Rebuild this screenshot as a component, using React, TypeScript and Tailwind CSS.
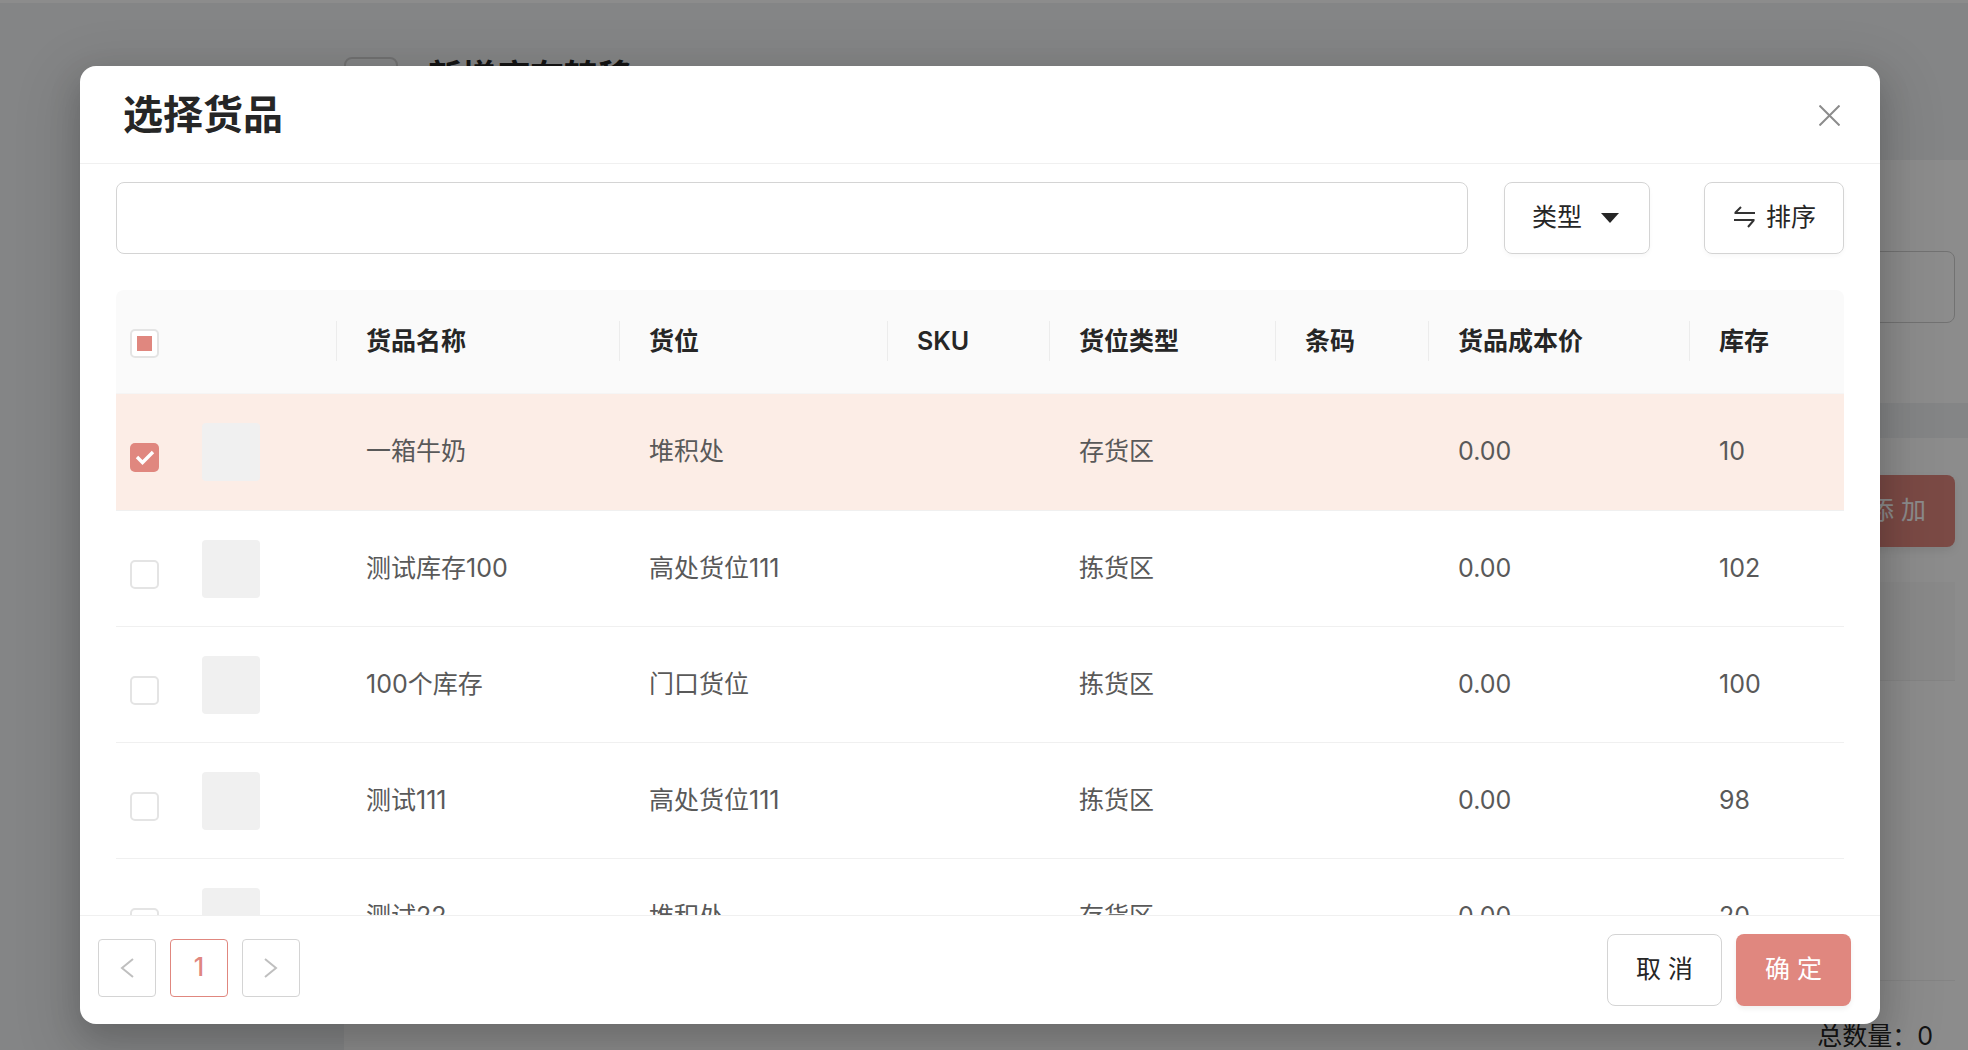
const cols = "grid grid-cols-[220px_283px_268px_162px_226px_153px_261px_155px]";
const heads = ["货品名称", "货位", "SKU", "货位类型", "条码", "货品成本价", "库存"];
const rows = [
  ["一箱牛奶", "堆积处", "", "存货区", "", "0.00", "10"],
  ["测试库存100", "高处货位111", "", "拣货区", "", "0.00", "102"],
  ["100个库存", "门口货位", "", "拣货区", "", "0.00", "100"],
  ["测试111", "高处货位111", "", "拣货区", "", "0.00", "98"],
  ["测试22", "堆积处", "", "存货区", "", "0.00", "20"],
];

function Checkbox({ state }: { state: "off" | "on" | "mixed" }) {
  if (state === "on") {
    return (
      <div className="w-[29px] h-[29px] rounded-[5px] bg-[#e0877f] flex items-center justify-center">
        <svg width="20" height="15" viewBox="0 0 20 15" fill="none">
          <path d="M2 7 L7.5 12.5 L18 2" stroke="#ffffff" strokeWidth="3.4" />
        </svg>
      </div>
    );
  }
  return (
    <div className="w-[29px] h-[29px] rounded-[5px] border-2 border-[#e4e4e4] bg-white flex items-center justify-center">
      {state === "mixed" && <div className="w-[15px] h-[15px] bg-[#e0877f]" />}
    </div>
  );
}

function Background() {
  return (
    <div className="w-[1968px] h-[1050px] bg-[#f0f2f5] flex flex-col overflow-hidden">
      <div className="h-[3px] bg-white shrink-0" />
      <div className="flex flex-1">
        <div className="w-[344px] shrink-0" />
        <div className="flex-1 flex flex-col">
          <div className="h-[157px] pt-[54px] flex items-start gap-[30px] shrink-0">
            <div className="w-[54px] h-[54px] rounded-[8px] border-2 border-[#d0d0d0]" />
            <div className="text-[34px] leading-[40px] font-semibold text-[#262626]">新增库存转移</div>
          </div>
          <div className="h-[243px] bg-white pt-[91px] pr-[13px] flex justify-end shrink-0">
            <div className="w-[600px] h-[72px] rounded-[8px] border border-[#d0d0d0]" />
          </div>
          <div className="mt-[35px] flex-1 bg-white pr-[13px] pt-[37px] flex flex-col items-end">
            <div className="w-[115px] h-[72px] rounded-[8px] bg-[#e0877f] flex items-center justify-center text-white text-[25px] shadow-[0_4px_8px_rgba(0,0,0,0.08)]">添 加</div>
            <div className="mt-[35px] w-full h-[99px] bg-[#fafafa] border-b border-[#f0f0f0]" />
            <div className="mt-[299px] w-full h-[41px] border-t border-[#f0f0f0]" />
            <div className="pr-[22px] text-[25px] leading-[30px] text-[#262626]">总数量：0</div>
          </div>
        </div>
      </div>
    </div>
  );
}

export default function App() {
  return (
    <div className="relative w-[1968px] h-[1050px] overflow-hidden font-['Inter','Noto_Sans_CJK_SC',sans-serif]">
      <Background />
      <div className="absolute inset-0 bg-black/45 pt-[66px] pl-[80px]">
        <div className="w-[1800px] h-[958px] bg-white rounded-[16px] flex flex-col overflow-hidden shadow-[0_12px_32px_rgba(0,0,0,0.16),0_18px_56px_16px_rgba(0,0,0,0.1)]">
          <div className="h-[98px] shrink-0 border-b border-[#f0f0f0] flex items-center justify-between pl-[43px] pr-[40px]">
            <div className="text-[40px] font-semibold text-[#262626]">选择货品</div>
            <svg className="mt-[1px]" width="21" height="21" viewBox="0 0 21 21" fill="none">
              <path d="M0.5 0.5 L20.5 20.5 M20.5 0.5 L0.5 20.5" stroke="#8c8c8c" strokeWidth="2" />
            </svg>
          </div>
          <div className="flex-1 min-h-0 overflow-hidden px-[36px] pt-[18px]">
            <div className="flex h-[72px]">
              <div className="flex-1 rounded-[8px] border border-[#d4d4d4]" />
              <div className="ml-[36px] w-[146px] rounded-[8px] border border-[#d4d4d4] shadow-[0_2px_4px_rgba(0,0,0,0.03)] flex items-center pl-[27px] text-[25px] text-[#262626]">
                <span>类型</span>
                <svg className="ml-[19px]" width="18" height="10" viewBox="0 0 18 10"><path d="M0 0 H18 L9 10 Z" fill="#262626" /></svg>
              </div>
              <div className="ml-[54px] w-[140px] rounded-[8px] border border-[#d4d4d4] shadow-[0_2px_4px_rgba(0,0,0,0.03)] flex items-center pl-[29px] text-[25px] text-[#262626]">
                <svg className="mb-[2px]" width="21" height="22" viewBox="0 0 21 22" fill="none">
                  <path d="M0.5 7 H21 M1 7 L7 1 M0 14 H20.5 M20 14 L14 21" stroke="#333333" strokeWidth="2" />
                </svg>
                <span className="ml-[11px]">排序</span>
              </div>
            </div>
            <div className={`${cols} mt-[36px] h-[104px] bg-[#fafafa] rounded-t-[8px] border-b border-[#f5f5f5]`}>
              <div className="flex items-center pl-[14px] pt-[3px]"><Checkbox state="mixed" /></div>
              {heads.map((h) => (
                <div key={h} className="flex items-center">
                  <div className="h-[40px] w-[1px] bg-[#ececec] mb-[2px]" />
                  <div className="ml-[29px] text-[25px] font-semibold text-[#262626]">{h}</div>
                </div>
              ))}
            </div>
            {rows.map((r, i) => (
              <div key={i} className={`${cols} ${i === 0 ? "h-[117px] bg-[#fcede6]" : "h-[116px]"} border-b border-[#f0f0f0]`}>
                <div className={`flex items-center pl-[14px] ${i === 0 ? "pb-[1px]" : ""}`}>
                  <div className="mt-[11px]"><Checkbox state={i === 0 ? "on" : "off"} /></div>
                  <div className="ml-[43px] w-[58px] h-[58px] rounded-[4px] bg-[#f0f0f0]" />
                </div>
                {r.map((c, j) => (
                  <div key={j} className="flex items-center pl-[30px] text-[25px] text-[#595959]">{c}</div>
                ))}
              </div>
            ))}
          </div>
          <div className="h-[109px] shrink-0 border-t border-[#f0f0f0] flex justify-between items-start pl-[18px] pr-[29px]">
            <div className="flex gap-[14px] pt-[23px]">
              <div className="w-[58px] h-[58px] rounded-[4px] border border-[#d4d4d4] flex items-center justify-center">
                <svg width="14" height="20" viewBox="0 0 14 20" fill="none"><path d="M13 1 L2 10 L13 19" stroke="#bfbfbf" strokeWidth="2" /></svg>
              </div>
              <div className="w-[58px] h-[58px] rounded-[4px] border border-[#e0877f] flex items-center justify-center text-[25px] font-medium text-[#e0877f]">1</div>
              <div className="w-[58px] h-[58px] rounded-[4px] border border-[#d4d4d4] flex items-center justify-center">
                <svg width="14" height="20" viewBox="0 0 14 20" fill="none"><path d="M1 1 L12 10 L1 19" stroke="#bfbfbf" strokeWidth="2" /></svg>
              </div>
            </div>
            <div className="flex gap-[14px] pt-[18px]">
              <div className="w-[115px] h-[72px] rounded-[8px] border border-[#d4d4d4] flex items-center justify-center text-[25px] text-[#262626]">取 消</div>
              <div className="w-[115px] h-[72px] rounded-[8px] bg-[#e0877f] flex items-center justify-center text-[25px] text-white shadow-[0_3px_5px_rgba(0,0,0,0.06)]">确 定</div>
            </div>
          </div>
        </div>
      </div>
    </div>
  );
}
